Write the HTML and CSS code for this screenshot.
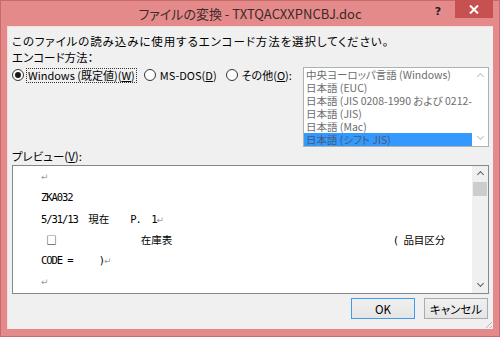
FILE: index.html
```html
<!DOCTYPE html>
<html lang="ja">
<head>
  <meta charset="UTF-8" />
  <title>ファイルの変換</title>
  <link rel="stylesheet" href="styles.css">
</head>
<body>
  <div class="window">
    <div class="titlebar">
      <div class="title">ファイルの変換 - TXTQACXXPNCBJ.doc</div>
      <div class="caption-btns">
        <span class="help">?</span>
        <span class="close">
          <svg width="10" height="9" viewBox="0 0 10 9"><path d="M1 0.5 L9 8.5 M9 0.5 L1 8.5" stroke="#fff" stroke-width="2"/></svg>
        </span>
      </div>
    </div>

    <div class="client">
      <p class="line intro">このファイルの読み込みに使用するエンコード方法を選択してください。</p>
      <p class="line">エンコード方法：</p>

      <div class="enc-row">
        <div class="radios">
          <label class="radio checked"><span class="circle"></span><span class="txt focus">Windows (既定値)(<u>W</u>)</span></label>
          <label class="radio"><span class="circle"></span><span class="txt">MS-DOS(<u>D</u>)</span></label>
          <label class="radio"><span class="circle"></span><span class="txt">その他(<u>O</u>):</span></label>
        </div>
        <div class="listbox">
          <ul class="items">
            <li>中央ヨーロッパ言語 (Windows)</li>
            <li>日本語 (EUC)</li>
            <li>日本語 (JIS 0208-1990 および 0212-1990)</li>
            <li>日本語 (JIS)</li>
            <li>日本語 (Mac)</li>
            <li class="selected">日本語 (シフト JIS)</li>
          </ul>
          <div class="vscroll disabled">
            <span class="arrow up"></span>
            <span class="track"></span>
            <span class="arrow down"></span>
          </div>
        </div>
      </div>

      <p class="line preview-label">プレビュー(<u>V</u>):</p>
      <div class="preview">
        <div class="pv-text">
          <div class="pv-line"><span class="ret">↵</span></div>
          <div class="pv-line">ZKA032</div>
          <div class="pv-line">5/31/13  <span class="jp">現在</span>    P.  1<span class="ret">↵</span></div>
          <div class="pv-line"> <span class="jp">□</span>                <span class="jp">在庫表</span>                                          ( <span class="jp">品目区分</span></div>
          <div class="pv-line">CODE =     )<span class="ret">↵</span></div>
          <div class="pv-line"><span class="ret">↵</span></div>
        </div>
        <div class="vscroll">
          <span class="arrow up"></span>
          <span class="track"><span class="thumb"></span></span>
          <span class="arrow down"></span>
        </div>
      </div>

      <div class="buttons">
        <button class="btn default">OK</button>
        <button class="btn">キャンセル</button>
      </div>
      <div class="grip"></div>
    </div>
  </div>
</body>
</html>
```

FILE: styles.css
```css
* { box-sizing: border-box; }

body {
  margin: 0;
  width: 500px;
  height: 337px;
  overflow: hidden;
  font-family: "Noto Sans CJK JP", sans-serif;
  font-feature-settings: "palt";
  font-size: 11.5px;
  color: #000;
  background: #fff;
}

.window {
  width: 500px;
  height: 337px;
  background: #e48a8a;
  border: 1px solid #c96a6a;
  display: flex;
  flex-direction: column;
}

/* title bar */
.titlebar {
  position: relative;
  height: 25px;
  flex: none;
}
.title {
  text-align: center;
  font-size: 13px;
  line-height: 26px;
  color: #3a2a2a;
}
.caption-btns {
  position: absolute;
  top: -1px;
  right: 6px;
  display: flex;
  align-items: flex-start;
}
.help {
  width: 30px;
  height: 20px;
  text-align: center;
  font-family: "DejaVu Sans", sans-serif;
  font-weight: bold;
  font-size: 11px;
  line-height: 24px;
  color: #222;
  margin-right: 2px;
}
.close {
  width: 38px;
  height: 18px;
  background: #c75050;
  display: flex;
  align-items: center;
  justify-content: center;
}

/* client area */
.client {
  position: relative;
  flex: 1;
  margin: 0 6px 7px;
  background: #f0f0f0;
  border-top: 1px solid #f6dede;
  border-left: 1px solid #f6dede;
  padding: 6px 4px 0 4px;
  display: flex;
  flex-direction: column;
}

.line {
  margin: 0;
  line-height: 16px;
  white-space: nowrap;
}
.intro { letter-spacing: 0.9px; }
u { text-decoration: underline; text-underline-offset: 1px; }

.enc-row {
  display: flex;
  margin-top: 2px;
}
.radios {
  flex: 1;
  display: flex;
  gap: 7px;
  align-items: flex-start;
  white-space: nowrap;
  font-size: 11px;
}
.radio {
  display: flex;
  align-items: center;
  height: 16px;
}
.circle {
  width: 12px;
  height: 12px;
  border: 1px solid #333;
  border-radius: 50%;
  background: #fff;
  margin-right: 2px;
  display: flex;
  align-items: center;
  justify-content: center;
}
.radio.checked .circle::after {
  content: "";
  width: 6px;
  height: 6px;
  border-radius: 50%;
  background: #1a1a1a;
}
.txt {
  padding: 0 1px;
  border: 1px dotted transparent;
  line-height: 13px;
}
.txt.focus { border-color: #333; }

/* listbox */
.listbox {
  flex: none;
  width: 186px;
  height: 80px;
  border: 1px solid #adb2b5;
  background: #fff;
  display: flex;
}
.items {
  list-style: none;
  margin: 0;
  padding: 0;
  flex: 1;
  min-width: 0;
  overflow: hidden;
}
.items li {
  height: 13px;
  line-height: 13px;
  padding-left: 2px;
  white-space: nowrap;
  overflow: hidden;
  color: #6d6d6d;
  font-size: 10.5px;
}
.items li.selected {
  background: #3399ff;
  color: #4a5a70;
}

/* scrollbars */
.vscroll {
  width: 16px;
  flex: none;
  background: #f0f0f0;
  display: flex;
  flex-direction: column;
}
.listbox .vscroll { background: #fff; }
.arrow {
  height: 15px;
  flex: none;
  display: flex;
  align-items: center;
  justify-content: center;
}
.arrow::after {
  content: "";
  width: 4px;
  height: 4px;
  border-left: 1.5px solid #606060;
  border-top: 1.5px solid #606060;
}
.arrow.up::after { transform: translateY(1px) rotate(45deg); }
.arrow.down::after { transform: translateY(-2px) rotate(225deg); }
.vscroll.disabled .arrow::after { border-color: #c4c4c4; }
.track {
  flex: 1;
  padding: 1px 1px;
}
.thumb {
  display: block;
  height: 14px;
  background: #cdcdcd;
}

/* preview */
.preview-label { margin-top: 1px; }
.preview {
  margin-top: 1px;
  height: 129px;
  border: 1px solid #828790;
  background: #fff;
  display: flex;
}
.pv-text {
  flex: 1;
  padding-left: 28px;
  overflow: hidden;
}
.pv-line {
  height: 21px;
  line-height: 21px;
  white-space: pre;
  font-family: "DejaVu Sans Mono", monospace;
  font-size: 10.5px;
  letter-spacing: -1.07px;
}
.jp {
  font-family: "Noto Sans CJK JP", sans-serif;
  font-feature-settings: normal;
  letter-spacing: 0;
}
.ret {
  font-family: "DejaVu Sans", sans-serif;
  color: #9a9a9a;
  font-size: 9px;
  letter-spacing: 0;
}

/* buttons */
.buttons {
  display: flex;
  justify-content: flex-end;
  gap: 9px;
  margin-top: 4px;
  padding-right: 1px;
}
.btn {
  width: 64px;
  height: 21px;
  padding: 0;
  border: 1px solid #acacac;
  background: linear-gradient(#f0f0f0, #e5e5e5);
  font-family: "Noto Sans CJK JP", sans-serif;
  font-feature-settings: "palt";
  font-size: 11.5px;
  color: #000;
}
.btn.default { border-color: #3c9cf0; }

.grip {
  position: absolute;
  right: 1px;
  bottom: 1px;
  width: 6px;
  height: 6px;
  background: linear-gradient(135deg, transparent 45%, #b0b0b0 45%, #b0b0b0 55%, transparent 55%, transparent 75%, #b0b0b0 75%, #b0b0b0 85%, transparent 85%);
}
```
